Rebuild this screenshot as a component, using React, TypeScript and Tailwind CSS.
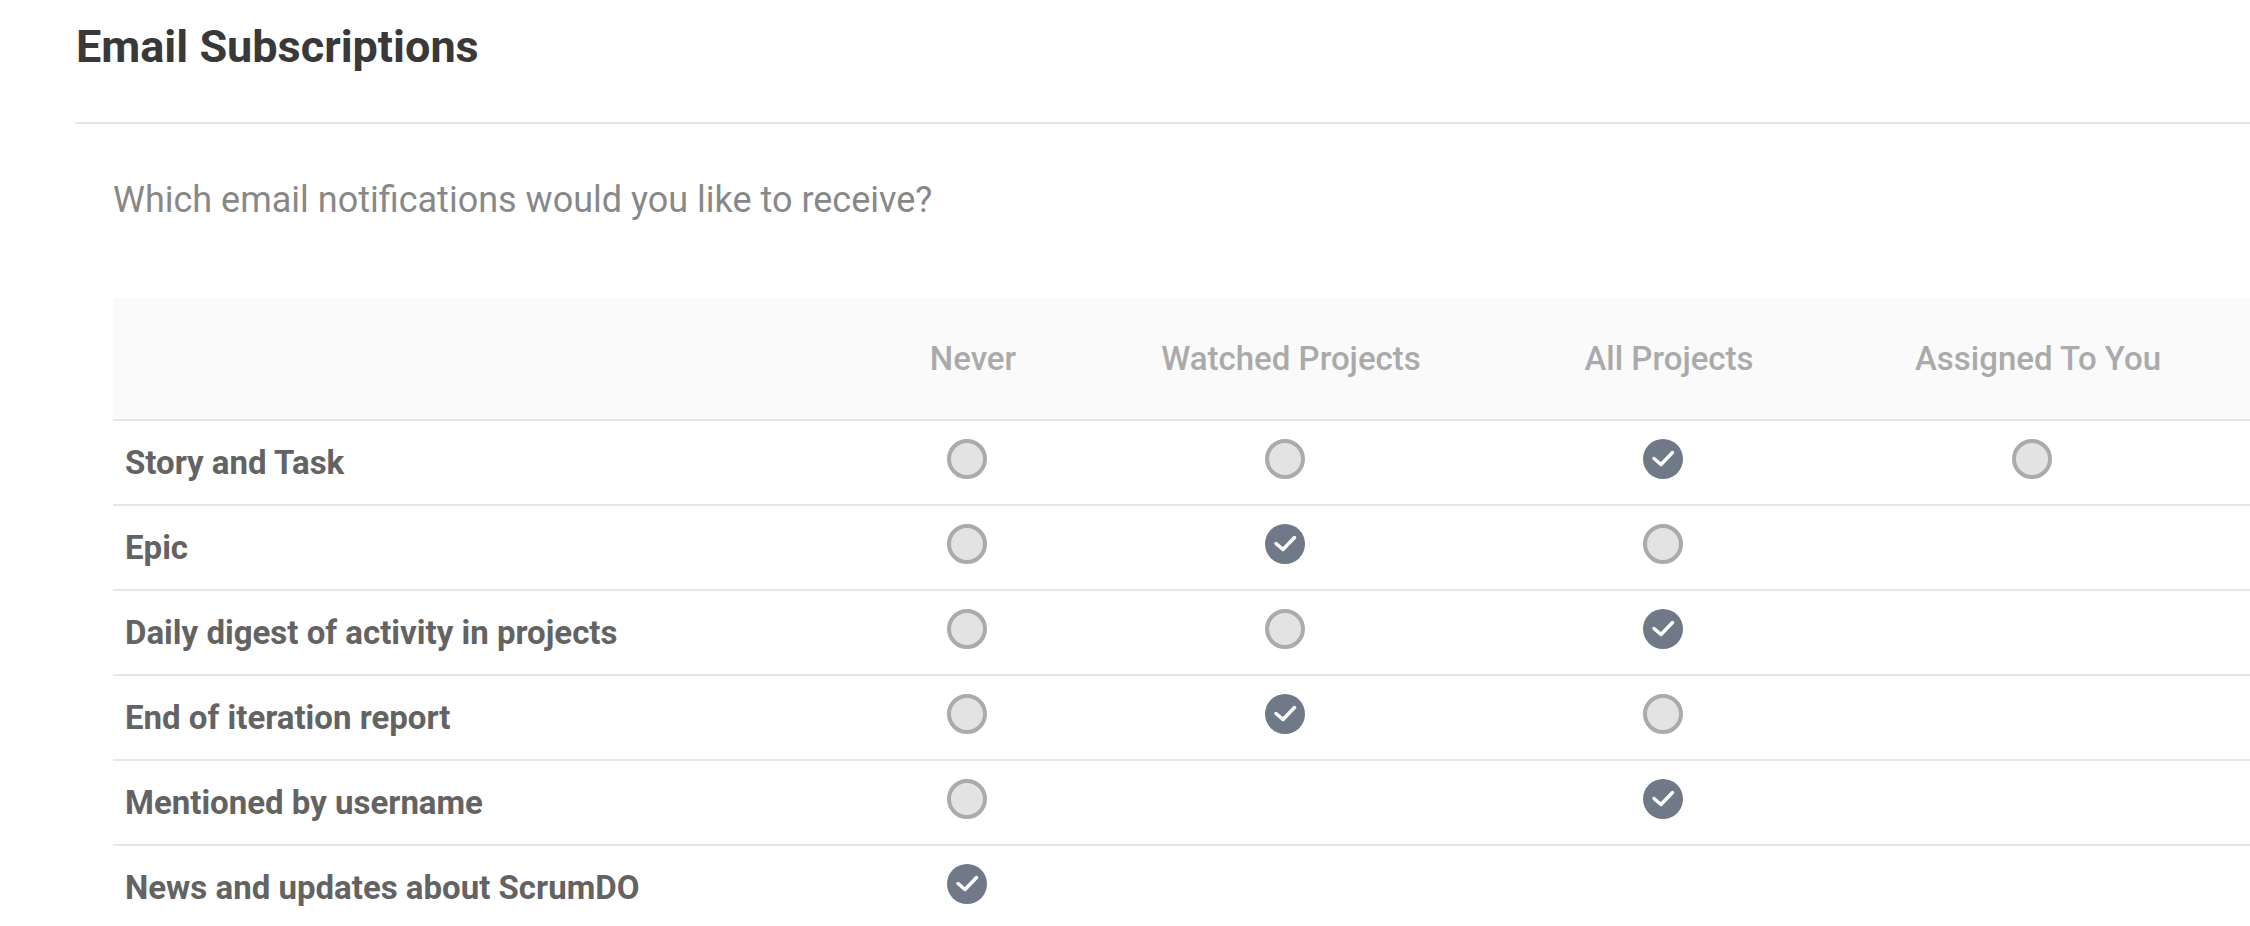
import React from "react";

type Cell = "on" | "off" | null;

const rows: { label: string; cells: Cell[] }[] = [
  { label: "Story and Task", cells: ["off", "off", "on", "off"] },
  { label: "Epic", cells: ["off", "on", "off", null] },
  { label: "Daily digest of activity in projects", cells: ["off", "off", "on", null] },
  { label: "End of iteration report", cells: ["off", "on", "off", null] },
  { label: "Mentioned by username", cells: ["off", null, "on", null] },
  { label: "News and updates about ScrumDO", cells: ["on", null, null, null] },
];

const headers = ["Never", "Watched Projects", "All Projects", "Assigned To You"];

function Radio({ checked }: { checked: boolean }) {
  if (checked) {
    return (
      <svg width="40" height="40" viewBox="0 0 40 40" className="mr-[12px] mb-[8px]">
        <circle cx="20" cy="20" r="20" fill="#707987" />
        <path
          d="M11 19.5 L18 25.5 L29.5 13.5"
          fill="none"
          stroke="#ffffff"
          strokeWidth="3.5"
          strokeLinecap="round"
          strokeLinejoin="round"
        />
      </svg>
    );
  }
  return (
    <div className="mr-[12px] mb-[8px] h-[40px] w-[40px] rounded-full border-[4px] border-[#ababab] bg-[#e3e3e3]" />
  );
}

export default function App() {
  return (
    <div className="min-h-screen bg-white font-['Roboto',sans-serif]">
      <div className="pl-[76px] pt-[24px]">
        <h1 className="text-[45px] leading-none font-bold text-[#393939]">Email Subscriptions</h1>
      </div>
      <div className="ml-[75px] mt-[53px] h-[2px] bg-[#e6e6e6]" />
      <div className="pl-[113px]">
        <p className="mt-[58px] text-[36px] leading-none text-[#888888]">
          Which email notifications would you like to receive?
        </p>
        <div className="mt-[80px]">
          <div className="grid h-[123px] grid-cols-[763px_194px_442px_314px_1fr] items-center border-b-2 border-[#e6e6e6] bg-[#fafafa]">
            <div />
            {headers.map((h) => (
              <div key={h} className="text-center text-[33px] leading-none font-medium text-[#aaaaaa]">
                {h}
              </div>
            ))}
          </div>
          {rows.map((r) => (
            <div
              key={r.label}
              className="grid h-[85px] grid-cols-[763px_194px_442px_314px_1fr] items-center border-b-2 border-[#e6e6e6]"
            >
              <div className="pl-[12px] text-[33px] leading-none font-bold text-[#636363]">{r.label}</div>
              {r.cells.map((c, i) => (
                <div key={i} className="flex items-center justify-center">
                  {c === null ? null : <Radio checked={c === "on"} />}
                </div>
              ))}
            </div>
          ))}
        </div>
      </div>
    </div>
  );
}
